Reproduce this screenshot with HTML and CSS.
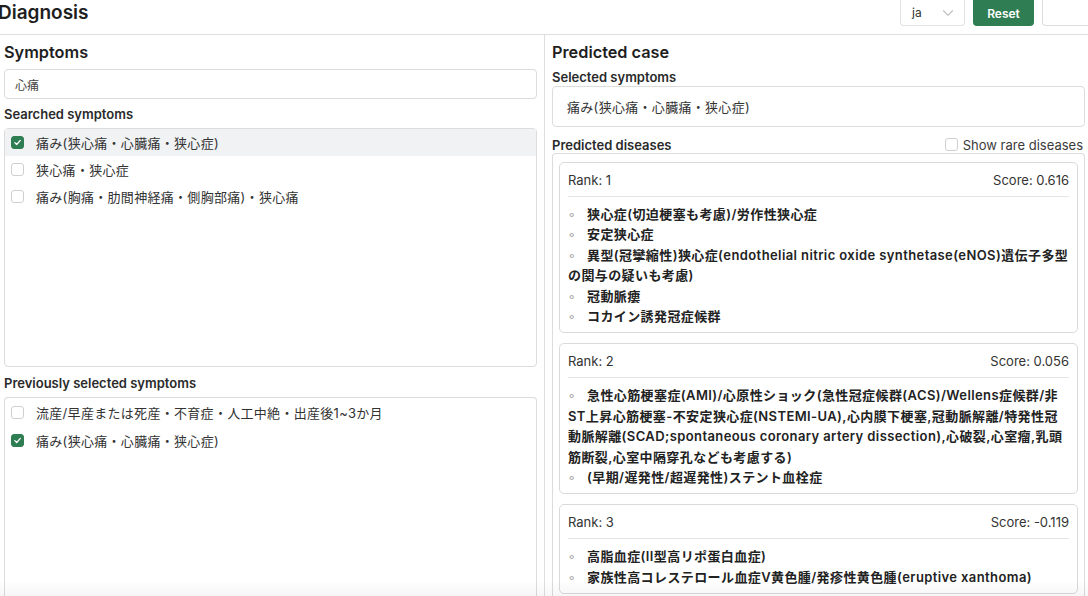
FILE: index.html
```html
<!DOCTYPE html>
<html>
  <head>
    <title>Diagnosis</title>
    <link rel="stylesheet" href="styles.css">
  </head>
  <body>
    <div class="topbar">
      <h1 class="title">Diagnosis</h1>
      <div class="controls">
        <div class="langsel">
          <span>ja</span>
          <svg width="12" height="8" viewBox="0 0 12 8"><path d="M1.5 1.8 L6 6.2 L10.5 1.8" fill="none" stroke="#c4c4c4" stroke-width="1.3" stroke-linecap="round" stroke-linejoin="round"/></svg>
        </div>
        <button class="btn-reset">Reset</button>
        <button class="btn-plain"></button>
      </div>
    </div>

    <div class="main">
      <div class="leftcol">
        <h2 class="sechead">Symptoms</h2>
        <div class="searchbox">心痛</div>

        <div class="label">Searched symptoms</div>
        <div class="listbox searched">
          <div class="row active">
            <span class="check on"><svg width="9" height="9" viewBox="0 0 9 9"><path d="M1.8 4.6 L3.7 6.5 L7.3 2.4" fill="none" stroke="#fff" stroke-width="1.3" stroke-linecap="round" stroke-linejoin="round"/></svg></span>
            痛み(狭心痛・心臓痛・狭心症)
          </div>
          <div class="row"><span class="check"></span>狭心痛・狭心症</div>
          <div class="row"><span class="check"></span>痛み(胸痛・肋間神経痛・側胸部痛)・狭心痛</div>
        </div>

        <div class="label prev">Previously selected symptoms</div>
        <div class="listbox previous">
          <div class="row tall"><span class="check"></span>流産/早産または死産・不育症・人工中絶・出産後1~3か月</div>
          <div class="row tall">
            <span class="check on"><svg width="9" height="9" viewBox="0 0 9 9"><path d="M1.8 4.6 L3.7 6.5 L7.3 2.4" fill="none" stroke="#fff" stroke-width="1.3" stroke-linecap="round" stroke-linejoin="round"/></svg></span>
            痛み(狭心痛・心臓痛・狭心症)
          </div>
        </div>
      </div>

      <div class="rightcol">
        <h2 class="sechead">Predicted case</h2>
        <div class="label">Selected symptoms</div>
        <div class="selectedbox">痛み(狭心痛・心臓痛・狭心症)</div>

        <div class="predhead">
          <div class="label">Predicted diseases</div>
          <label class="rare"><span class="check"></span>Show rare diseases</label>
        </div>

        <div class="cards">
          <div class="card">
            <div class="cardhead"><span>Rank: 1</span><span>Score: 0.616</span></div>
            <ul class="diseases">
              <li>狭心症(切迫梗塞も考慮)/労作性狭心症</li>
              <li>安定狭心症</li>
              <li>異型(冠攣縮性)狭心症(endothelial nitric oxide synthetase(eNOS)遺伝子多型の関与の疑いも考慮)</li>
              <li>冠動脈瘻</li>
              <li>コカイン誘発冠症候群</li>
            </ul>
          </div>
          <div class="card">
            <div class="cardhead"><span>Rank: 2</span><span>Score: 0.056</span></div>
            <ul class="diseases">
              <li>急性心筋梗塞症(AMI)/心原性ショック(急性冠症候群(ACS)/Wellens症候群/非ST上昇心筋梗塞-不安定狭心症(NSTEMI-UA),心内膜下梗塞,冠動脈解離/特発性冠動脈解離(SCAD;spontaneous coronary artery dissection),心破裂,心室瘤,乳頭筋断裂,心室中隔穿孔なども考慮する)</li>
              <li>(早期/遅発性/超遅発性)ステント血栓症</li>
            </ul>
          </div>
          <div class="card">
            <div class="cardhead"><span>Rank: 3</span><span>Score: -0.119</span></div>
            <ul class="diseases">
              <li>高脂血症(II型高リポ蛋白血症)</li>
              <li>家族性高コレステロール血症V黄色腫/発疹性黄色腫(eruptive xanthoma)</li>
            </ul>
          </div>
        </div>
      </div>
    </div>
  </body>
</html>
```

FILE: styles.css
```css
body{
  margin: 0;
  height: 596px;
  overflow: hidden;
  background: #fff;
  color: #222;
  font-family: Inter, "Noto Sans CJK JP", sans-serif;
  font-size: 13px;
}
body::after{
  content: "";
  position: fixed;
  left: 0;
  right: 0;
  bottom: 0;
  height: 16px;
  background: linear-gradient(rgba(0,0,0,0), rgba(0,0,0,0.035));
}

/* top bar */
.topbar{
  display: flex;
  align-items: flex-start;
  height: 34px;
  border-bottom: 1px solid #dedede;
}
.title{
  margin: 0 0 0 -2px;
  padding-top: 1px;
  font-size: 19px;
  line-height: 24px;
  font-weight: 600;
  color: #1e1e1e;
}
.controls{
  margin-left: auto;
  margin-right: -14px;
  display: flex;
  gap: 8px;
}
.langsel{
  box-sizing: border-box;
  width: 65px;
  height: 26px;
  border: 1px solid #e2e2e2;
  border-top: none;
  border-radius: 0 0 4px 4px;
  display: flex;
  align-items: center;
  justify-content: space-between;
  padding: 0 10px 0 11px;
  font-size: 12px;
  color: #333;
}
.btn-reset{
  width: 61px;
  height: 26px;
  border: none;
  border-radius: 0 0 4px 4px;
  background: #2f7d52;
  color: #fff;
  font-family: Inter, sans-serif;
  font-size: 12px;
  font-weight: 600;
}
.btn-plain{
  width: 60px;
  height: 26px;
  border: 1px solid #dcdcdc;
  border-top: none;
  border-radius: 0 0 4px 4px;
  background: #fff;
}

/* columns */
.main{
  display: grid;
  grid-template-columns: 545px 1fr;
  height: 561px;
}
.leftcol{
  border-right: 1px solid #dedede;
  padding: 6px 7px 0 4px;
  display: flex;
  flex-direction: column;
  min-height: 0;
}
.rightcol{
  padding: 6px 3px 0 7px;
  display: flex;
  flex-direction: column;
  min-height: 0;
}
.sechead{
  margin: 0;
  font-size: 16.3px;
  line-height: 22px;
  font-weight: 600;
  color: #1e1e1e;
}
.label{
  font-size: 13px;
  line-height: 18px;
  font-weight: 600;
  color: #2a2a2a;
}
.searchbox{
  margin-top: 6px;
  height: 30px;
  box-sizing: border-box;
  border: 1px solid #dcdcdc;
  border-radius: 4px;
  padding: 0 10px;
  display: flex;
  align-items: center;
  font-size: 12px;
  color: #444;
  margin-bottom: 6px;
}
.listbox{
  margin-top: 5px;
  border: 1px solid #dcdcdc;
  border-radius: 4px;
  box-sizing: border-box;
}
.searched{
  height: 239px;
}
.prev{
  margin-top: 7px;
}
.previous{
  flex: 1;
  border-bottom: none;
  border-radius: 4px 4px 0 0;
}
.row{
  height: 27px;
  display: flex;
  align-items: center;
  gap: 12px;
  padding-left: 6px;
  color: #333;
  letter-spacing: 0.3px;
}
.row.tall{
  height: 28px;
}
.row.active{
  background: #f1f2f4;
}
.check{
  box-sizing: border-box;
  width: 13px;
  height: 13px;
  border: 1px solid #cfcfcf;
  border-radius: 3px;
  background: #fff;
  display: inline-flex;
  align-items: center;
  justify-content: center;
  flex-shrink: 0;
}
.check.on{
  background: #2f7d52;
  border-color: #2f7d52;
}

/* right side */
.rightcol .label{
  margin-top: 5px;
}
.selectedbox{
  height: 41px;
  box-sizing: border-box;
  border: 1px solid #dcdcdc;
  border-radius: 4px;
  padding: 0 14px;
  display: flex;
  align-items: center;
  color: #333;
  letter-spacing: 0.3px;
}
.predhead{
  display: flex;
  justify-content: space-between;
  align-items: center;
  margin-top: 9px;
  height: 17px;
}
.predhead .label{
  margin-top: 0;
}
.rare{
  display: flex;
  align-items: center;
  gap: 5px;
  color: #3a3a3a;
  margin-right: 2px;
}
.cards{
  flex: 1;
  border: 1px solid #dcdcdc;
  border-bottom: none;
  border-radius: 4px 4px 0 0;
  padding: 8px 6px 0 6px;
  overflow: hidden;
}
.card{
  border: 1px solid #dadada;
  border-radius: 5px;
  padding: 0 8px;
  margin-bottom: 10px;
}
.cardhead{
  display: flex;
  justify-content: space-between;
  line-height: 18px;
  padding: 8px 0 7px;
  border-bottom: 1px solid #e4e4e4;
  color: #333;
}
.diseases{
  list-style: none;
  margin: 0;
  padding: 7px 0 6px;
  font-weight: 600;
  line-height: 20.4px;
  color: #222;
  letter-spacing: 0.4px;
}
.diseases li::before{
  content: "◦";
  display: inline-block;
  width: 19px;
  color: #9a9a9a;
  font-weight: 400;
  letter-spacing: 0;
}
```
